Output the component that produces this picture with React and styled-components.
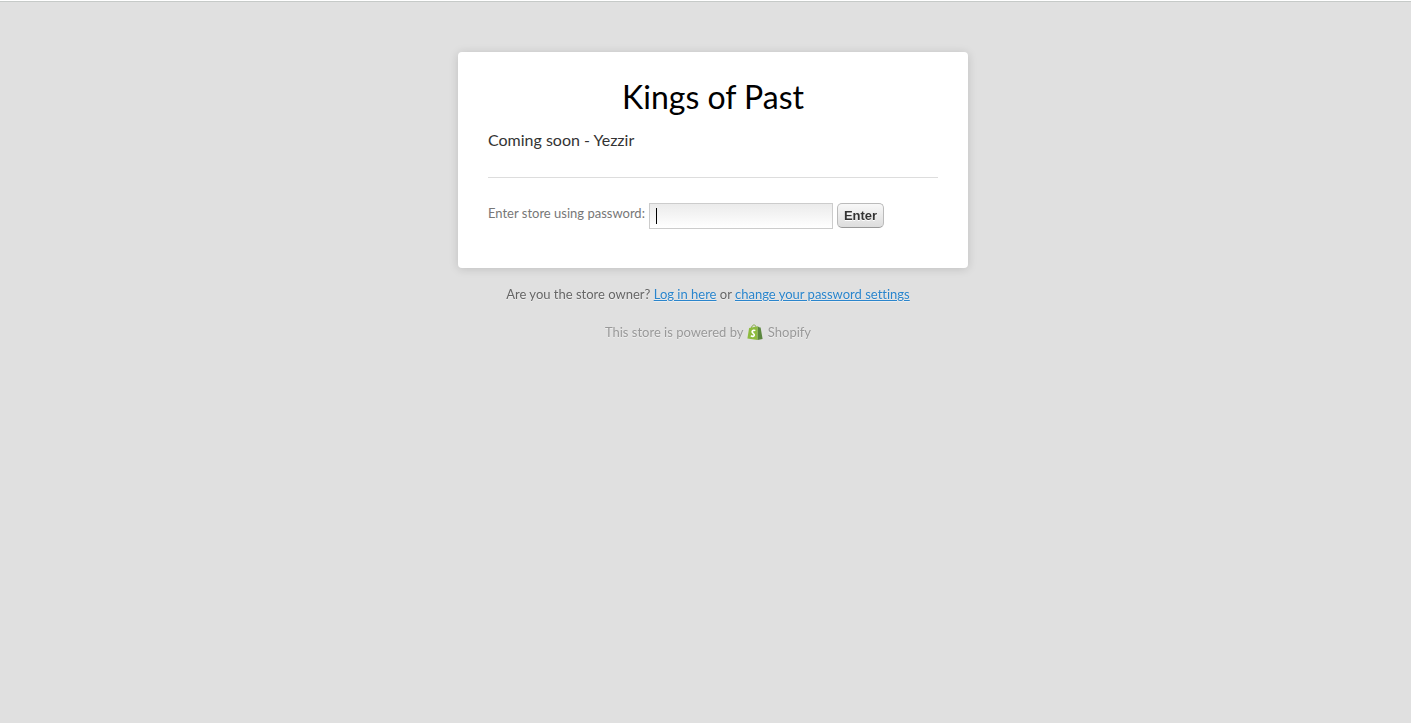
import React, { useState } from 'react'
import styled, { createGlobalStyle } from 'styled-components'

const GlobalStyle = createGlobalStyle`
  body {
    margin: 0;
    background-color: #e0e0e0;
    color: #333;
    font-family: "Trebuchet MS", Lato, sans-serif;
    font-size: 13px;
    font-variant-ligatures: none;
    line-height: 18px;
  }
`;

function ShopifyBag() {
    return (
        <BagIcon viewBox="0 0 16 16" aria-hidden="true">
            <path d="M4.2 4.6C4.5 2.4 5.7 1 7 .9c1.3-.1 1.9 1.2 1.9 2.9" fill="none" stroke="#7fa63c" strokeWidth="0.9" />
            <path d="M2.1 4 10.8 2.3 10.6 16 .4 14.4z" fill="#8dbb3f" />
            <path d="M10.8 2.3 12 3.2 13.6 3.4 15.6 15 10.6 16z" fill="#5a863e" />
            <path d="M8.3 6.6C7.3 6 5.3 6.2 5.1 7.7c-.2 1.5 2.4 1.7 2.2 3.4-.2 1.5-2 1.7-3.4.6" fill="none" stroke="#fff" strokeWidth="1.6" />
        </BagIcon>
    );
}

function App() {
    const [password, setPassword] = useState('');

return (
    <>
    <GlobalStyle />
    <Page>
        <Wrapper>
            <Card>
                <h1>Kings of Past</h1>
                <Message>Coming soon - Yezzir</Message>
                <PasswordForm onSubmit={(e) => e.preventDefault()}>
                    <label htmlFor="password">Enter store using password:</label>
                    <PasswordInput
                        id="password"
                        type="password"
                        autoFocus
                        $empty={password === ''}
                        value={password}
                        onChange={(e) => setPassword(e.target.value)}
                    />
                    <EnterButton type="submit">Enter</EnterButton>
                </PasswordForm>
            </Card>
            <Owner>
                Are you the store owner? <a href="#login">Log in here</a> or <a href="#settings">change your password settings</a>
            </Owner>
            <Powered>
                This store is powered by <ShopifyBag /> Shopify
            </Powered>
        </Wrapper>
    </Page>
    </>
);
}

const Page = styled.div`
  border-top: 1px solid #fff;
  padding: 0 0 20px 5px;
  box-shadow: inset 0 1px 0 #c6cac8;
`;

const Wrapper = styled.main`
  box-sizing: border-box;
  max-width: 500px;
  margin: 0 auto;
  padding-top: 51px;
`;

const Card = styled.section`
  margin-right: -10px;
  padding: 25px 30px 39px;
  background-color: #fff;
  border-radius: 4px;
  box-shadow: 0 1px 10px rgba(0, 0, 0, 0.15);
  h1 {
    margin: 0;
    color: #000;
    font-size: 32px;
    font-weight: normal;
    line-height: 40px;
    text-align: center;
  }
`;

const Message = styled.p`
  margin: 12px 0 25px;
  padding-bottom: 26px;
  border-bottom: 1px solid #ddd;
  font-size: 16px;
  line-height: 22px;
`;

const PasswordForm = styled.form`
  display: flex;
  align-items: flex-start;
  gap: 4px;
  label {
    color: #777;
    line-height: 20px;
  }
`;

// an empty field shows its cursor bar over the shading
const PasswordInput = styled.input`
  box-sizing: border-box;
  width: 184px;
  height: 26px;
  padding: 4px 6px;
  border: 1px solid #ccc;
  outline: none;
  background:
    linear-gradient(#000, #000) 6px 4px / ${({ $empty }) => ($empty ? '1px 16px' : '0 0')} no-repeat,
    linear-gradient(#ebebeb, #fff);
  caret-color: ${({ $empty }) => ($empty ? 'transparent' : '#000')};
  font-size: 13px;
`;

const EnterButton = styled.button`
  box-sizing: border-box;
  height: 25px;
  padding: 0 6px;
  border: 1px solid #bbb;
  border-bottom-color: #999;
  border-radius: 5px;
  background: linear-gradient(#f8f8f8, #ddd);
  color: #333;
  font: bold 13px "Liberation Sans", Arial, sans-serif;
  text-shadow: 0 1px 0 #fff;
  cursor: pointer;
`;

const Owner = styled.p`
  margin: 17px 0 20px;
  color: #666;
  text-align: center;
  text-shadow: 0 1px 0 #eee;
  a {
    color: #2a85cc;
  }
`;

const Powered = styled.p`
  margin: 0;
  color: #999;
  text-align: center;
  text-shadow: 0 1px 0 #eee;
`;

const BagIcon = styled.svg`
  width: 16px;
  height: 16px;
  margin-right: 2px;
  vertical-align: text-bottom;
`;

export default App
